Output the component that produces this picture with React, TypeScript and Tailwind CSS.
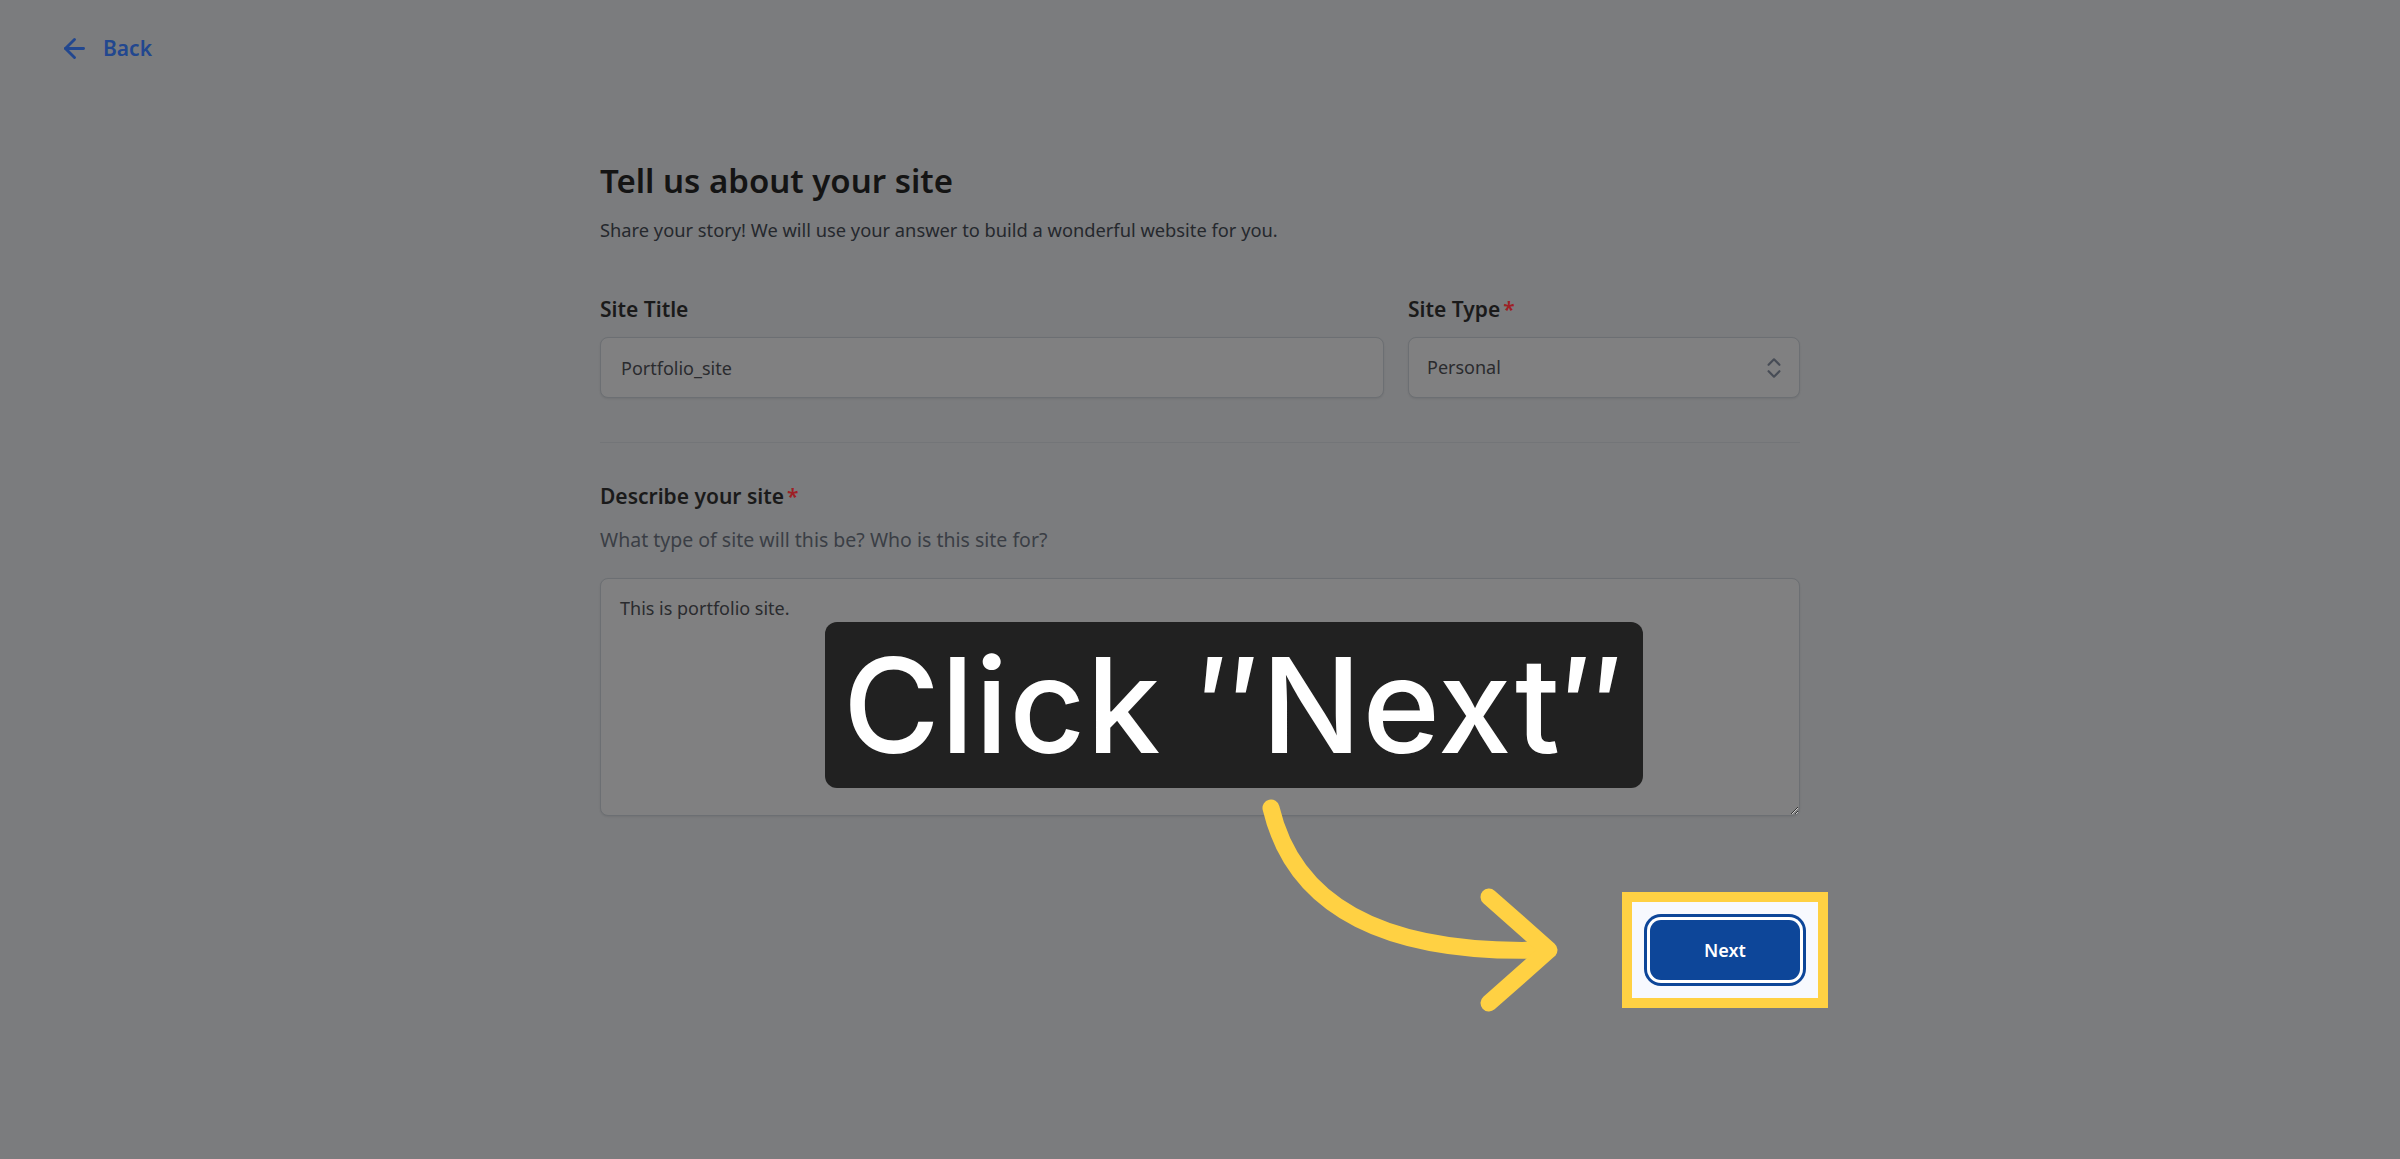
import { ArrowLeft, ChevronsUpDown } from 'lucide-react';

const font = "font-['Noto_Sans','Open_Sans',sans-serif]";

export default function App() {
  return (
    <div className={`relative min-h-[1159px] w-full bg-[#7b7c7e] ${font}`}>
      <div className="pl-[59px] pt-[34px]">
        <a className="flex h-[28px] w-fit items-center gap-[13px] text-[21px] font-semibold leading-[28px] text-[#22478f]">
          <ArrowLeft size={31} strokeWidth={2.2} />
          <span>Back</span>
        </a>
      </div>

      <main className="mx-auto w-[1200px] pt-[99px]">
        <h1 className="text-[33px] font-semibold leading-[40px] text-[#141414]">Tell us about your site</h1>
        <p className="mt-[17px] text-[18.3px] leading-[24px] text-[#25282d]">
          Share your story! We will use your answer to build a wonderful website for you.
        </p>

        <div className="mt-[53px] flex gap-[24px]">
          <div className="flex-1">
            <label className="block text-[21px] font-semibold leading-[28px] text-[#1a1a1a]">Site Title</label>
            <input
              readOnly
              value="Portfolio_site"
              className="mt-[14px] h-[61px] w-full rounded-[8px] border border-[#6c6f73] bg-[#808081] px-[20px] text-[18px] text-[#2a2b2e] shadow-[0_1px_2px_rgba(0,0,0,0.08)] outline-none"
            />
          </div>
          <div className="w-[392px]">
            <label className="block text-[21px] font-semibold leading-[28px] text-[#1a1a1a]">
              Site Type<span className="ml-[3px] text-[#9e1f25]">*</span>
            </label>
            <div className="mt-[14px] flex h-[61px] items-center justify-between rounded-[8px] border border-[#6c6f73] bg-[#808081] pl-[18px] pr-[12px] text-[18px] text-[#2a2b2e] shadow-[0_1px_2px_rgba(0,0,0,0.08)]">
              <span>Personal</span>
              <ChevronsUpDown size={26} strokeWidth={2} className="text-[#474c56]" />
            </div>
          </div>
        </div>

        <div className="mt-[44px] h-px bg-[#737578]" />

        <label className="mt-[39px] block text-[21px] font-semibold leading-[28px] text-[#1a1a1a]">
          Describe your site<span className="ml-[3px] text-[#9e1f25]">*</span>
        </label>
        <p className="mt-[18px] text-[19.5px] leading-[24px] text-[#3a3e45]">What type of site will this be? Who is this site for?</p>
        <textarea
          readOnly
          value="This is portfolio site."
          className="mt-[26px] block h-[238px] w-full rounded-[8px] border border-[#6c6f73] bg-[#808081] px-[19px] py-[16px] text-[18px] leading-[26px] text-[#2a2b2e] shadow-[0_1px_2px_rgba(0,0,0,0.08)] outline-none"
        />

        <div className="mt-[104px] flex justify-end">
          <div className="relative">
            <div className="absolute -inset-[28px] border-[10px] border-[#ffd143] bg-[#f7f9fe]" />
            <button className="relative h-[60px] w-[150px] rounded-[11px] bg-[#0d4699] text-[18px] font-semibold text-white ring-[3px] ring-[#0d4699] ring-offset-[3px] ring-offset-white">
              Next
            </button>
          </div>
        </div>
      </main>

      <div className="absolute left-[825px] top-[622px] flex h-[166px] w-[818px] items-center justify-center rounded-[12px] bg-[#212121]">
        <span className="font-['Inter',sans-serif] text-[132px] font-medium leading-none tracking-[1px] text-white">Click ″Next″</span>
      </div>

      <svg className="absolute left-[1240px] top-[780px]" width="340" height="250" viewBox="0 0 340 250" fill="none">
        <path d="M31 28 C 55 130, 150 175, 305 170" stroke="#ffd143" strokeWidth="17" strokeLinecap="round" />
        <path d="M249 117 L309 170 L249 223" stroke="#ffd143" strokeWidth="17" strokeLinecap="round" strokeLinejoin="round" />
      </svg>
    </div>
  );
}
